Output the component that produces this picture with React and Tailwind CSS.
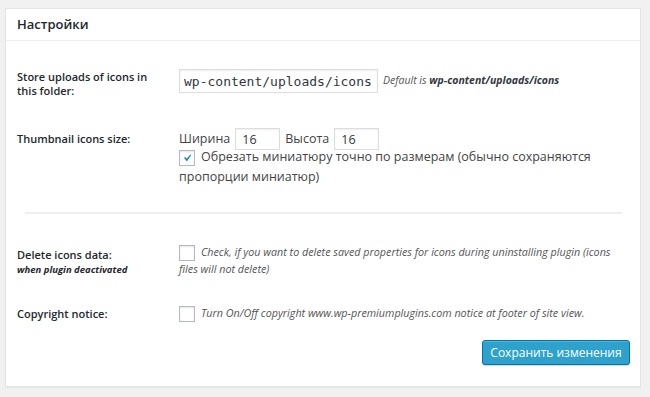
import React from 'react'

function Checkbox({ checked }) {
  return (
    <span className="inline-flex w-[16px] h-[16px] shrink-0 items-center justify-center border border-[#b4b9be] bg-white shadow-[inset_0_1px_2px_rgba(0,0,0,0.1)] align-middle">
      {checked && (
        <svg width="14" height="14" viewBox="0 0 20 20">
          <path d="M14.83 4.89l1.34.94-5.81 8.38H9.02L5.78 9.67l1.34-1.25 2.57 2.4z" fill="#1e8cbe" />
        </svg>
      )}
    </span>
  )
}

function Label({ children }) {
  return (
    <div className="w-[162px] shrink-0 pr-[8px] text-[11px] leading-[14px] font-semibold text-[#23282d]">
      {children}
    </div>
  )
}

export default function App() {
  return (
    <div className="h-[397px] w-[650px] bg-[#f1f1f1] pt-[8px] pl-[5px] font-['Open_Sans',sans-serif] text-[#444]">
      <div className="w-[636px] h-[379px] bg-white border border-[#e5e5e5] shadow-[0_1px_1px_rgba(0,0,0,0.04)]">
        {/* header */}
        <div className="h-[32px] flex items-center px-[11px] border-b border-[#eee]">
          <h2 className="text-[13px] font-semibold text-[#23282d]">Настройки</h2>
        </div>

        <div className="pl-[11px] pr-[12px]">
          {/* uploads folder */}
          <div className="flex mt-[28px]">
            <div className="pt-[1px]">
              <Label>
                Store uploads of icons in
                <br />
                this folder:
              </Label>
            </div>
            <div className="flex items-center h-[24px]">
              <input
                readOnly
                value="wp-content/uploads/icons"
                className="w-[199px] h-[24px] px-[4px] border border-[#ddd] shadow-[inset_0_1px_2px_rgba(0,0,0,0.07)] font-['DejaVu_Sans_Mono',monospace] text-[13px] text-[#32373c] outline-none"
              />
              <span className="ml-[5px] text-[10.5px] italic text-[#555]">
                Default is <b className="text-[#32373c]">wp-content/uploads/icons</b>
              </span>
            </div>
          </div>

          {/* thumbnail size */}
          <div className="flex mt-[30px]">
            <div className="pt-[4px]">
              <Label>Thumbnail icons size:</Label>
            </div>
            <div className="flex-1 text-[12.5px] text-[#444]">
              <div className="flex items-center h-[22px]">
                <span>Ширина</span>
                <input
                  readOnly
                  value="16"
                  className="ml-[5px] w-[45px] h-[22px] px-[6px] border border-[#ddd] shadow-[inset_0_1px_2px_rgba(0,0,0,0.07)] text-[12.5px] text-[#32373c] outline-none"
                />
                <span className="ml-[5px]">Высота</span>
                <input
                  readOnly
                  value="16"
                  className="ml-[5px] w-[45px] h-[22px] px-[6px] border border-[#ddd] shadow-[inset_0_1px_2px_rgba(0,0,0,0.07)] text-[12.5px] text-[#32373c] outline-none"
                />
              </div>
              <p className="leading-[20px] w-[440px] -mt-[3px]">
                <Checkbox checked />
                <span className="ml-[6px]">
                  Обрезать миниатюру точно по размерам (обычно сохраняются пропорции миниатюр)
                </span>
              </p>
            </div>
          </div>

          <hr className="mt-[25px] ml-[8px] mr-[6px] border-0 border-t-2 border-[#eee]" />

          {/* delete data */}
          <div className="flex mt-[30px]">
            <div className="pt-[4px]">
              <Label>
                Delete icons data:
                <br />
                <i className="text-[9.5px] font-bold">when plugin deactivated</i>
              </Label>
            </div>
            <p className="flex-1 text-[10.75px] italic leading-[17px] text-[#555]">
              <Checkbox />
              <span className="ml-[6px]">
                Check, if you want to delete saved properties for icons during uninstalling plugin (icons files will not delete)
              </span>
            </p>
          </div>

          {/* copyright */}
          <div className="flex mt-[27px] items-center">
            <Label>Copyright notice:</Label>
            <p className="flex-1 text-[10.75px] italic leading-[17px] text-[#555]">
              <Checkbox />
              <span className="ml-[6px]">
                Turn On/Off copyright www.wp-premiumplugins.com notice at footer of site view.
              </span>
            </p>
          </div>

          <div className="flex justify-end mt-[18px] -mr-[2px]">
            <button className="h-[25px] w-[148px] rounded-[3px] border border-[#0074a2] bg-[#2ea2cc] text-[12px] text-white shadow-[inset_0_1px_0_rgba(120,200,230,0.5),0_1px_0_rgba(0,0,0,0.15)]">
              Сохранить изменения
            </button>
          </div>
        </div>
      </div>
    </div>
  )
}
